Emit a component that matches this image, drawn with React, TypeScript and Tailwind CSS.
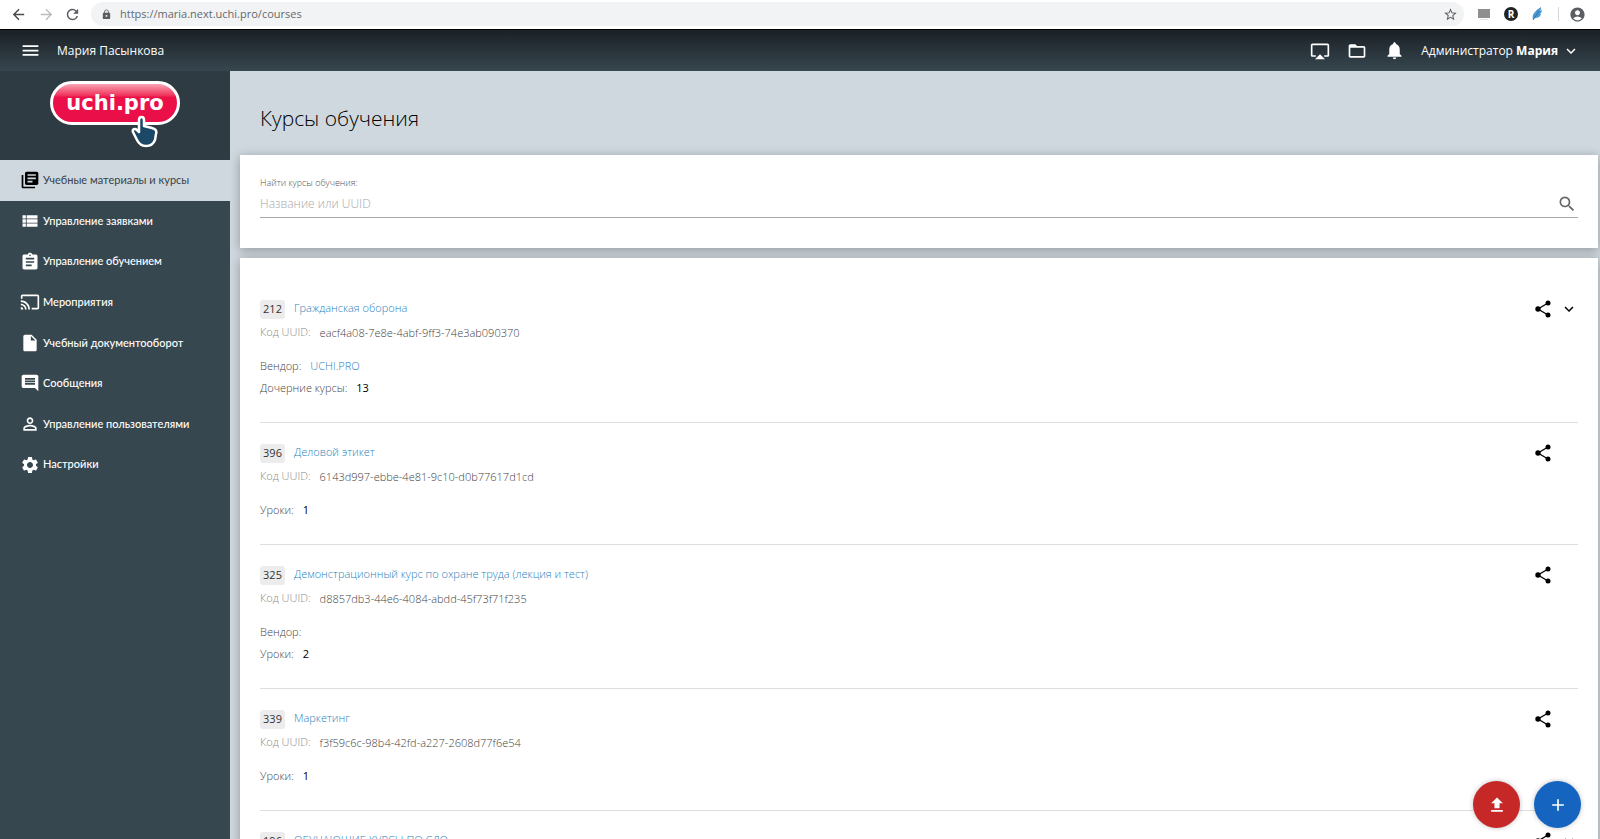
import {
  MdAccountCircle,
  MdAdd,
  MdAirplay,
  MdArrowBack,
  MdArrowForward,
  MdAssignment,
  MdCast,
  MdComment,
  MdExpandMore,
  MdFileUpload,
  MdFolderOpen,
  MdInsertDriveFile,
  MdLibraryBooks,
  MdLock,
  MdMenu,
  MdNotifications,
  MdPersonOutline,
  MdRefresh,
  MdSearch,
  MdSettings,
  MdStarBorder,
  MdViewList,
} from "react-icons/md";

const menu = [
  { label: "Учебные материалы и курсы", icon: MdLibraryBooks, active: true },
  { label: "Управление заявками", icon: MdViewList },
  { label: "Управление обучением", icon: MdAssignment },
  { label: "Мероприятия", icon: MdCast },
  { label: "Учебный документооборот", icon: MdInsertDriveFile },
  { label: "Сообщения", icon: MdComment },
  { label: "Управление пользователями", icon: MdPersonOutline },
  { label: "Настройки", icon: MdSettings },
];

type Meta = { label: string; value?: string; link?: boolean };
type Course = { id: number; title: string; uuid?: string; meta: Meta[]; expandable?: boolean };

const courses: Course[] = [
  {
    id: 212,
    title: "Гражданская оборона",
    uuid: "eacf4a08-7e8e-4abf-9ff3-74e3ab090370",
    meta: [
      { label: "Вендор:", value: "UCHI.PRO", link: true },
      { label: "Дочерние курсы:", value: "13" },
    ],
    expandable: true,
  },
  {
    id: 396,
    title: "Деловой этикет",
    uuid: "6143d997-ebbe-4e81-9c10-d0b77617d1cd",
    meta: [{ label: "Уроки:", value: "1" }],
  },
  {
    id: 325,
    title: "Демонстрационный курс по охране труда (лекция и тест)",
    uuid: "d8857db3-44e6-4084-abdd-45f73f71f235",
    meta: [{ label: "Вендор:" }, { label: "Уроки:", value: "2" }],
  },
  {
    id: 339,
    title: "Маркетинг",
    uuid: "f3f59c6c-98b4-42fd-a227-2608d77f6e54",
    meta: [{ label: "Уроки:", value: "1" }],
  },
  {
    id: 196,
    title: "ОБУЧАЮЩИЕ КУРСЫ ПО СДО",
    meta: [],
    expandable: true,
  },
];

function BrowserBar() {
  return (
    <div className="flex h-[29px] shrink-0 items-center bg-white pb-px pl-2.5 pr-3.5 text-[#5a5d61]">
      <button aria-label="Назад" className="w-7 text-[#45484c]"><MdArrowBack size={17} /></button>
      <button aria-label="Вперёд" className="w-[26px] text-[#bdbdbd]"><MdArrowForward size={17} /></button>
      <button aria-label="Обновить" className="w-[26px]"><MdRefresh size={17} /></button>
      <div className="ml-px flex h-6 flex-1 items-center rounded-full bg-[#f1f3f4] pl-2.5 pr-1.5">
        <MdLock size={11} />
        <input
          aria-label="Адрес"
          readOnly
          defaultValue="https://maria.next.uchi.pro/courses"
          className="ml-2 min-w-0 flex-1 bg-transparent text-[11px] leading-4 text-[#66696d] outline-none"
        />
        <button aria-label="В закладки"><MdStarBorder size={15} /></button>
      </div>
      <div className="ml-3.5 flex items-center">
        <svg width="12" height="13" viewBox="0 0 12 13">
          <rect width="12" height="9" y="1" fill="#8f8f8f" />
          <rect x="2" y="11" width="8" height="1" fill="#e4e4e4" />
        </svg>
        <span className="ml-3.5 flex size-[14px] items-center justify-center rounded-full bg-[#222] text-[10px] font-bold leading-3 text-white">R</span>
        <svg width="12" height="14" viewBox="0 0 12 14" className="ml-3.5">
          <path d="M1 13c-1-4 0-6 2-8 2-3 5-4 6-5 0 2 0 3-1 4l2-1c0 2-1 3-2 4l1 0c-1 3-3 4-6 4z" fill="#4b9bd2" />
          <path d="M1 13 7 4" stroke="#1f5f96" strokeWidth="0.7" />
        </svg>
        <span className="ml-3.5 h-3.5 w-px bg-[#d5d7d9]" />
        <button aria-label="Профиль" className="ml-2.5"><MdAccountCircle size={17} /></button>
      </div>
    </div>
  );
}

function Header() {
  return (
    <header className="flex h-[42px] shrink-0 items-center border-t border-black bg-linear-to-b from-[#1b2126] to-[#37474f] px-5 text-white">
      <button aria-label="Меню"><MdMenu size={21} /></button>
      <span className="ml-4 text-[12px]">Мария Пасынкова</span>
      <div className="ml-auto flex items-center">
        <button aria-label="Трансляция"><MdAirplay size={20} /></button>
        <button aria-label="Файлы" className="ml-[17px]"><MdFolderOpen size={20} /></button>
        <button aria-label="Уведомления" className="ml-[17px]"><MdNotifications size={21} /></button>
        <button className="ml-4 flex items-center text-[12px]">
          Администратор&nbsp;<b>Мария</b>
          <MdExpandMore size={18} className="ml-1 stroke-white" />
        </button>
      </div>
    </header>
  );
}

function Logo() {
  return (
    <svg width="132" height="68" viewBox="0 0 132 68" role="img" aria-label="uchi.pro">
      <defs>
        <linearGradient id="pill" x1="0" y1="0" x2="0" y2="1">
          <stop offset="0" stopColor="#f9b3c0" />
          <stop offset="0.32" stopColor="#f0315a" />
          <stop offset="0.36" stopColor="#ec1049" />
          <stop offset="1" stopColor="#e90f48" />
        </linearGradient>
      </defs>
      <rect x="2.5" y="2.5" width="127" height="41" rx="20.5" fill="url(#pill)" stroke="#fff" strokeWidth="3" />
      <text x="66" y="30" textAnchor="middle" fill="#fff" fontSize="21" fontWeight="700" fontFamily="DejaVu Sans, sans-serif">uchi.pro</text>
      <path
        d="M90 40c0-4 5-4 5 0v6l8 2c4 1 5 3 4 6l-1 6c-2 5-5 6-9 6-5 0-7-2-9-6l-4-8c-1-3 2-4 4-2l2 2z"
        fill="#1b4866"
        stroke="#fff"
        strokeWidth="2.5"
        strokeLinejoin="round"
      />
    </svg>
  );
}

function Sidebar() {
  return (
    <aside className="w-[230px] shrink-0 bg-[#37474f]">
      <div className="flex h-[89px] justify-center bg-[#2f3b43] pt-[9px]">
        <Logo />
      </div>
      <nav className="grid h-[325px] grid-rows-8 font-['Lato','Noto_Sans',sans-serif]">
        {menu.map(({ label, icon: Icon, active }) => (
          <a
            key={label}
            href="#"
            className={
              active
                ? "flex items-center gap-[3px] bg-[#cfd8de] pl-5 text-[11px] text-[#37434a]"
                : "flex items-center gap-[3px] pl-5 text-[11px] font-medium text-white"
            }
          >
            <Icon size={20} className={active ? "shrink-0 text-black" : "shrink-0"} />
            <span className="whitespace-nowrap">{label}</span>
          </a>
        ))}
      </nav>
    </aside>
  );
}

function ShareIcon() {
  return (
    <svg width="16" height="18" viewBox="0 0 16 18">
      <path d="M13 3 3 9l10 6" fill="none" stroke="currentColor" strokeWidth="1.3" />
      <circle cx="13" cy="3" r="2.5" />
      <circle cx="3" cy="9" r="2.7" />
      <circle cx="13" cy="15" r="2.5" />
    </svg>
  );
}

function CourseRow({ course }: { course: Course }) {
  return (
    <li className="flex justify-between border-b border-[#dcdfe1] pb-[23px] pt-[18px] text-[11px] font-light">
      <div>
        <div className="flex h-6 items-center gap-[9px]">
          <span className="flex h-[19px] w-[25px] items-center justify-center rounded-[3px] bg-[#ececec] font-normal text-[#333]">{course.id}</span>
          <a href="#" className="pb-0.5 text-[#1f7fbd]">{course.title}</a>
        </div>
        {course.uuid && (
          <div className="flex h-6 items-center gap-[9px]">
            <span className="pb-0.5 text-[#8a8a8a]">Код UUID:</span>
            <span className="text-[#444]">{course.uuid}</span>
          </div>
        )}
        <div className="mt-2.5">
          {course.meta.map((m) => (
            <div key={m.label} className="flex h-[22px] items-center gap-[9px]">
              <span className="text-[#444]">{m.label}</span>
              {m.link ? (
                <a href="#" className="text-[#1f7fbd]">{m.value}</a>
              ) : (
                <span className="font-normal text-black">{m.value}</span>
              )}
            </div>
          ))}
        </div>
      </div>
      <div className="flex h-6 w-[43px] items-center justify-between">
        <button aria-label="Поделиться"><ShareIcon /></button>
        {course.expandable && (
          <button aria-label="Развернуть"><MdExpandMore size={18} /></button>
        )}
      </div>
    </li>
  );
}

export default function App() {
  return (
    <div className="flex h-screen flex-col overflow-hidden bg-[#cfd8de] font-['Open_Sans','Noto_Sans',sans-serif]">
      <BrowserBar />
      <Header />
      <div className="flex min-h-0 flex-1">
        <Sidebar />
        <main className="min-w-0 flex-1 overflow-hidden pl-2.5 pr-0.5">
          <h1 className="flex h-[84px] items-center pl-5 pt-3 text-[21px] font-light text-black">Курсы обучения</h1>
          <form className="h-[93px] bg-white px-5 pt-5 shadow-[0_2px_10px_rgba(0,0,0,0.3)]">
            <label htmlFor="search" className="block text-[9px] font-light leading-4 text-[#555]">Найти курсы обучения:</label>
            <div className="flex h-[27px] items-center border-b border-[#a5a9ab] pr-px">
              <input
                id="search"
                placeholder="Название или UUID"
                className="min-w-0 flex-1 text-[12px] font-light outline-none placeholder:text-[#a8a8a8]"
              />
              <button type="button" aria-label="Найти" className="text-[#666]"><MdSearch size={20} /></button>
            </div>
          </form>
          <ul className="mt-2.5 bg-white px-5 pt-[21px] shadow-[0_2px_10px_rgba(0,0,0,0.3)]">
            {courses.map((c) => (
              <CourseRow key={c.id} course={c} />
            ))}
          </ul>
        </main>
      </div>
      <div className="fixed bottom-[11px] right-[19px] flex gap-[14px] text-white">
        <button aria-label="Загрузить" className="flex size-[47px] items-center justify-center rounded-full bg-[#c62828] shadow-[0_0_5px_rgba(0,0,0,0.25)]">
          <MdFileUpload size={20} />
        </button>
        <button aria-label="Добавить" className="flex size-[47px] items-center justify-center rounded-full bg-[#1565c0] shadow-[0_0_5px_rgba(0,0,0,0.25)]">
          <MdAdd size={20} />
        </button>
      </div>
    </div>
  );
}
